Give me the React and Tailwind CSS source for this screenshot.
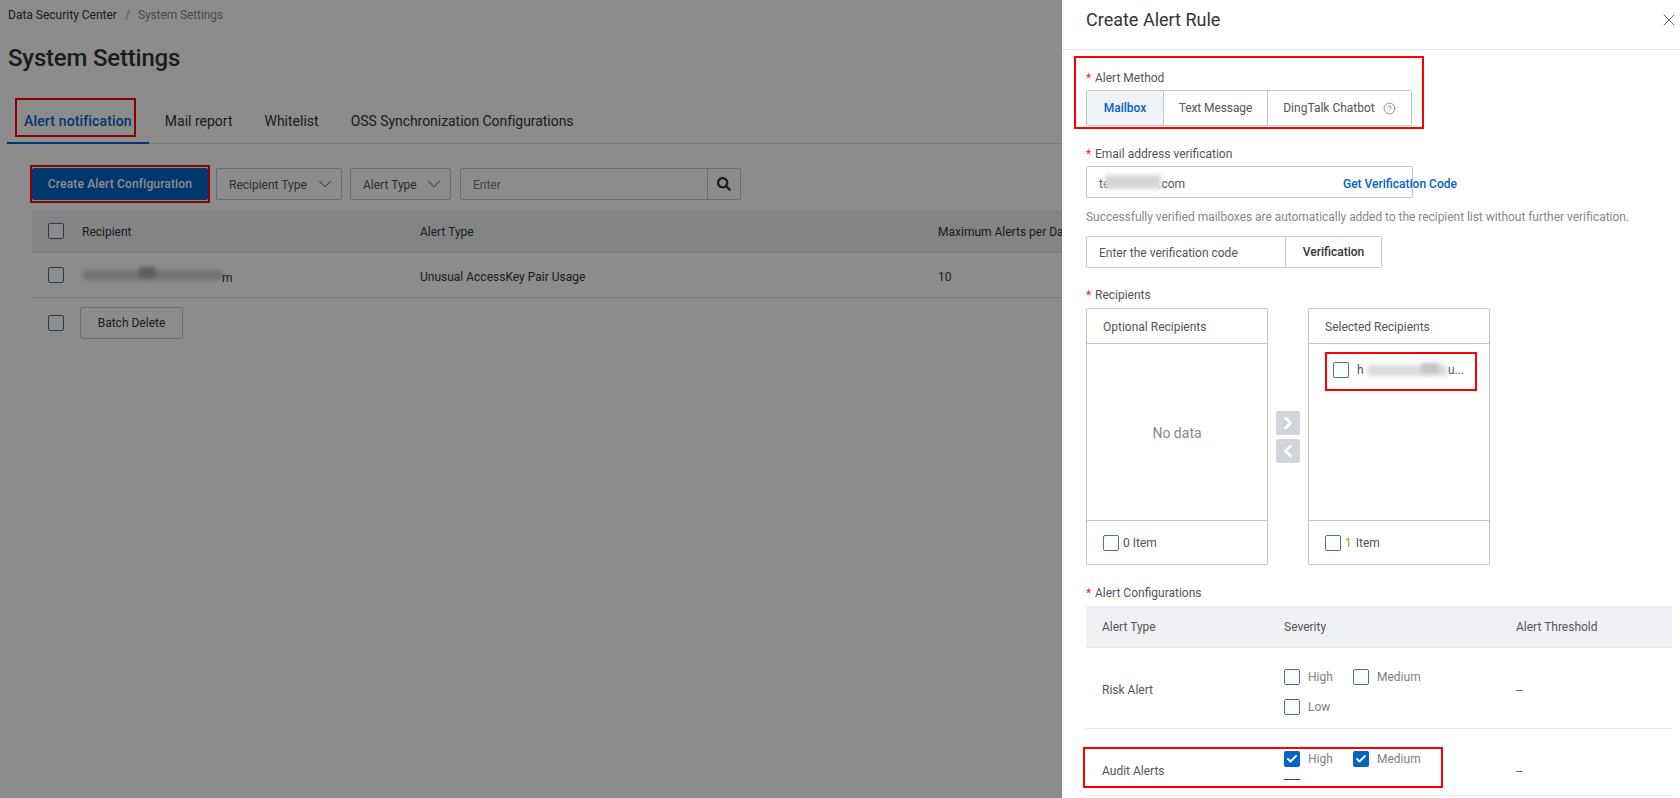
import React from 'react'
import { ChevronDown, ChevronLeft, ChevronRight, CircleHelp, Check, X } from 'lucide-react'
import { FaSearch } from 'react-icons/fa'

function Checkbox({ checked, dark }) {
    if (checked) {
        return (
            <span className="w-4 h-4 rounded-[2px] bg-[#0064c8] flex items-center justify-center shrink-0">
                <Check className="w-3 h-3 text-white" strokeWidth={4} />
            </span>
        )
    }
    return <span className={`block w-4 h-4 rounded-[2px] border bg-white shrink-0 ${dark ? 'border-[#4a6d94]' : 'border-[#4a7098]'}`}></span>
}

function Label({ children, className }) {
    return (
        <div className={`h-5 flex items-center text-[12px] text-[#555] ${className || ''}`}>
            <span className="text-[#f5222d] w-[9px]">*</span>
            {children}
        </div>
    )
}

function RedBox({ className }) {
    return <span className={`absolute border-2 border-[#fe0000] pointer-events-none ${className}`}></span>
}

function Smudge({ className }) {
    return <span className={`absolute blur-[2px] ${className}`}></span>
}

function SelectBox({ label, className }) {
    return (
        <div className={`h-8 border border-[#c0c6cc] rounded-[2px] flex items-center justify-between pl-[12px] pr-[5px] text-[12px] text-[#555] ${className}`}>
            <span className="pt-[2px]">{label}</span>
            <ChevronDown className="w-[22px] h-[22px] text-[#444]" strokeWidth={1} />
        </div>
    )
}

function Severity({ label, checked, className }) {
    return (
        <div className={`flex items-center gap-2 text-[12px] text-[#808080] ${className}`}>
            <Checkbox checked={checked} />
            {label}
        </div>
    )
}

function Transfer({ title, footer, count, children }) {
    return (
        <div className="w-[182px] h-[257px] border border-[#c0c6cc] rounded-[2px] flex flex-col">
            <div className="h-[35px] border-b border-[#c0c6cc] flex items-center pl-4 pt-[2px] text-[12px] text-[#555] shrink-0">{title}</div>
            <div className="flex-1 relative">{children}</div>
            <div className="h-[44px] border-t border-[#c0c6cc] flex items-center pl-4 gap-1 text-[12px] text-[#555] shrink-0">
                <Checkbox />
                <span><span className={count}>{footer}</span> Item</span>
            </div>
        </div>
    )
}

function Page() {
    return (
        <div className="w-full h-full bg-white pl-2 font-['Roboto',sans-serif]">
            <div className="h-[30px] flex items-center text-[12px]">
                <span className="text-[#333]">Data Security Center</span>
                <span className="text-[#aaa] mx-2">/</span>
                <span className="text-[#888] tracking-[-0.1px]">System Settings</span>
            </div>
            <h1 className="h-14 flex items-center text-[24px] font-medium text-[#333] tracking-[-0.2px]">System Settings</h1>
            <div className="mt-[14px] h-[44px] border-b border-[#d9dde1] flex -ml-px">
                <div className="relative px-[17px] h-[44px] border-b-2 border-[#0064c8] flex items-center text-[14px] font-medium text-[#0064c8] tracking-[0.15px]">
                    Alert notification
                    <RedBox className="left-[8px] right-[13px] top-[-2px] bottom-[5px]" />
                </div>
                <div className="px-4 flex items-center text-[14px] text-[#333]">Mail report</div>
                <div className="px-4 flex items-center text-[14px] text-[#333]">Whitelist</div>
                <div className="px-4 flex items-center text-[14px] text-[#333] tracking-[-0.05px]">OSS Synchronization Configurations</div>
            </div>
            <div className="pl-6 pt-6">
                <div className="flex items-center h-8">
                    <div className="relative w-[176px] h-8 bg-[#0064c8] rounded-[2px] flex items-center justify-center text-[12px] font-medium text-white tracking-[0.15px]">
                        Create Alert Configuration
                        <RedBox className="-left-[2px] -right-[2px] -top-[3px] -bottom-[3px]" />
                    </div>
                    <SelectBox label="Recipient Type" className="w-[126px] ml-2" />
                    <SelectBox label="Alert Type" className="w-[101px] ml-2" />
                    <div className="ml-[9px] w-[248px] h-8 border border-[#c0c6cc] rounded-l-[2px] flex items-center pl-3 pt-[2px] text-[12px] text-[#777]">Enter</div>
                    <div className="w-[33px] h-8 border border-l-0 border-[#c0c6cc] rounded-r-[2px] flex items-center justify-center text-[#333]">
                        <FaSearch className="w-[14px] h-[14px]" />
                    </div>
                </div>
                <div className="mt-[10px] w-[1620px] h-[43px] bg-[#eff1f5] border-b border-[#d9dde1] grid grid-cols-[50px_338px_518px_1fr] items-center text-[12px] text-[#333]">
                    <div className="pl-4"><Checkbox dark /></div>
                    <div className="pt-[2px]">Recipient</div>
                    <div className="pt-[2px]">Alert Type</div>
                    <div className="pt-[2px]">Maximum Alerts per Day</div>
                </div>
                <div className="w-[1620px] h-[45px] border-b border-[#d9dde1] grid grid-cols-[50px_338px_518px_1fr] items-center text-[12px] text-[#333]">
                    <div className="pl-4"><Checkbox dark /></div>
                    <div className="relative h-full">
                        <Smudge className="left-[1px] w-[140px] top-[17px] h-[10px] bg-[#d0d0d0]" />
                        <Smudge className="left-[57px] w-[16px] top-[14px] h-[11px] bg-[#a8a8a8]" />
                        <span className="absolute left-[140px] top-[16px]">m</span>
                    </div>
                    <div className="pt-[4px]">Unusual AccessKey Pair Usage</div>
                    <div className="pt-[4px]">10</div>
                </div>
                <div className="mt-[9px] flex items-center pl-4">
                    <Checkbox dark />
                    <div className="ml-4 w-[103px] h-8 border border-[#c0c6cc] rounded-[2px] flex items-center justify-center text-[12px] text-[#333]">Batch Delete</div>
                </div>
            </div>
        </div>
    )
}

function Drawer() {
    return (
        <div className="absolute top-0 right-0 bottom-0 w-[618px] bg-white font-['Roboto',sans-serif] overflow-hidden">
            <div className="h-[50px] border-b border-[#e3e6e9] flex items-start justify-between pl-6 pr-[1px]">
                <h2 className="h-[38px] flex items-center text-[18px] text-[#333]">Create Alert Rule</h2>
                <X className="w-5 h-5 mt-[10px] text-[#555]" strokeWidth={1.1} />
            </div>
            <div className="pl-6 pr-2 pt-[17px]">
                <div className="relative w-[326px]">
                    <RedBox className="-left-[12px] -right-[12px] -top-[11px] -bottom-[3px]" />
                    <Label className="pt-[2px]">Alert Method</Label>
                    <div className="mt-[3px] h-9 border border-[#c0c6cc] rounded-[2px] flex text-[12px] text-[#555]">
                        <div className="w-[77px] bg-[#eff3f8] border-r border-[#c0c6cc] flex items-center justify-center font-medium text-[#0064c8]">Mailbox</div>
                        <div className="w-[104px] border-r border-[#c0c6cc] flex items-center justify-center tracking-[-0.1px]">Text Message</div>
                        <div className="flex-1 flex items-center justify-center gap-2">
                            DingTalk Chatbot
                            <CircleHelp className="w-[13px] h-[13px] text-[#666]" strokeWidth={1.25} />
                        </div>
                    </div>
                </div>
                <div className="mt-[17px]">
                    <Label className="pt-[2px]">Email address verification</Label>
                    <div className="mt-[3px] relative w-[327px] h-8 border border-[#c0c6cc] rounded-[2px] flex items-center pl-3 pt-[3px] text-[12px] text-[#555]">
                        <span>te</span>
                        <Smudge className="left-[18px] w-[56px] top-[8px] h-[14px] bg-[#d6d6d6]" />
                        <span className="ml-[49px]">.com</span>
                        <span className="absolute left-[256px] top-[8px] whitespace-nowrap font-medium text-[#0064c8]">Get Verification Code</span>
                    </div>
                </div>
                <div className="mt-[9px] h-5 flex items-center text-[12px] text-[#888] tracking-[-0.04px]">Successfully verified mailboxes are automatically added to the recipient list without further verification.</div>
                <div className="mt-[9px] flex h-8 text-[12px]">
                    <div className="w-[200px] border border-[#c0c6cc] rounded-l-[2px] flex items-center pl-3 pt-[2px] text-[#555]">Enter the verification code</div>
                    <div className="w-[96px] border border-l-0 border-[#c0c6cc] rounded-r-[2px] flex items-center justify-center font-medium text-[#333]">Verification</div>
                </div>
                <div className="mt-[17px]">
                    <Label>Recipients</Label>
                    <div className="mt-[3px] flex items-center">
                        <Transfer title="Optional Recipients" footer="0">
                            <div className="absolute inset-0 pt-[2px] flex items-center justify-center text-[14px] text-[#888]">No data</div>
                        </Transfer>
                        <div className="w-[40px] flex flex-col items-center gap-1">
                            <div className="w-6 h-6 rounded-[2px] bg-[#d1d5d9] flex items-center justify-center"><ChevronRight className="w-5 h-5 text-white" strokeWidth={3} /></div>
                            <div className="w-6 h-6 rounded-[2px] bg-[#d1d5d9] flex items-center justify-center"><ChevronLeft className="w-5 h-5 text-white" strokeWidth={3} /></div>
                        </div>
                        <Transfer title="Selected Recipients" footer="1" count="text-[#c98a00] mr-[1px]">
                            <div className="relative mt-[18px] ml-6 h-4 flex items-center gap-2 text-[12px] text-[#555]">
                                <Checkbox />
                                <span>h</span>
                                <Smudge className="left-[34px] w-[80px] top-[3px] h-[11px] bg-[#dcdcdc]" />
                                <Smudge className="left-[88px] w-[18px] top-[1px] h-[10px] bg-[#c4c4c4]" />
                                <span className="absolute left-[115px]">u...</span>
                                <RedBox className="-left-[8px] right-[12px] -top-[10px] -bottom-[13px]" />
                            </div>
                        </Transfer>
                    </div>
                </div>
                <div className="mt-[18px]">
                    <Label>Alert Configurations</Label>
                    <div className="mt-[3px] w-[586px] text-[12px] text-[#555]">
                        <div className="h-[42px] bg-[#eff1f5] border-b border-[#e3e6e9] grid grid-cols-[198px_232px_1fr] items-center">
                            <div className="pl-4">Alert Type</div>
                            <div>Severity</div>
                            <div>Alert Threshold</div>
                        </div>
                        <div className="h-[81px] border-b border-[#e3e6e9] grid grid-cols-[198px_232px_1fr] items-center">
                            <div className="pl-4 pt-[4px]">Risk Alert</div>
                            <div className="flex flex-wrap w-[160px] gap-y-3 pt-[7px]">
                                <Severity label="High" className="w-[69px]" />
                                <Severity label="Medium" className="w-[90px]" />
                                <Severity label="Low" className="w-[69px]" />
                            </div>
                            <div className="pt-[4px]">--</div>
                        </div>
                        <div className="relative h-[67px] border-b border-[#e3e6e9] grid grid-cols-[198px_232px_1fr] items-center">
                            <RedBox className="-left-[3px] w-[360px] top-[18px] h-[41px]" />
                            <div className="pl-4 pt-[18px]">Audit Alerts</div>
                            <div className="self-start pt-[21px]">
                                <div className="flex">
                                    <Severity label="High" checked className="w-[69px]" />
                                    <Severity label="Medium" checked className="w-[90px]" />
                                </div>
                                <div className="mt-[11px] w-4 h-px bg-[#0a4f96]"></div>
                            </div>
                            <div className="pt-[18px]">--</div>
                        </div>
                    </div>
                </div>
            </div>
        </div>
    )
}

export default function App() {
    return (
        <div className="relative w-[1680px] h-[798px] overflow-hidden bg-white">
            <Page />
            <div className="absolute inset-0 bg-black/45"></div>
            <Drawer />
        </div>
    )
}
